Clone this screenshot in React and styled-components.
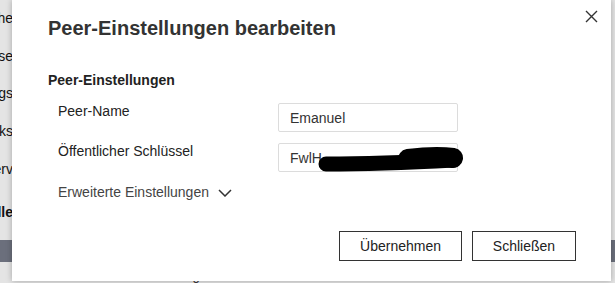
import React from "react"
import styled, { createGlobalStyle } from "styled-components"

const GlobalStyle = createGlobalStyle`
    html, body {
        margin: 0;
        padding: 0;
        background: #e4e4e4;
    }
    * {
        box-sizing: border-box;
    }
`;

const Screen = styled.div`
    position: relative;
    width: 615px;
    height: 283px;
    overflow: hidden;
    background: #e4e4e4;
    font-family: "Liberation Sans", Arial, sans-serif;
`;

const Backdrop = styled.div`
    display: flex;
    flex-direction: column;
    height: 100%;
`;

const NavList = styled.div`
    display: flex;
    flex-direction: column;
    padding-top: 8px;
    height: 240px;
`;

const NavItem = styled.div`
    width: 13px;
    height: 39px;
    display: flex;
    justify-content: flex-end;
    overflow: hidden;
    white-space: nowrap;
    font-size: 14px;
    line-height: 20px;
    font-weight: ${({ $bold }) => ($bold ? 700 : 400)};
    color: #111;
    margin-top: ${({ $offset }) => $offset || 0}px;
`;

const Band = styled.div`
    height: 36px;
    background: #6b6f7c;
`;

const BottomLine = styled.div`
    display: flex;
    gap: 100px;
    padding: 6px 0 0 40px;
    font-size: 13px;
    color: #222;
    white-space: nowrap;
`;

const Dialog = styled.div`
    position: absolute;
    left: 12px;
    top: 0;
    width: 599px;
    height: 281px;
    background: #fff;
    box-shadow: 0 0 6px rgba(0, 0, 0, 0.28);
    padding: 16px 35px 20px 36px;
    display: flex;
    flex-direction: column;
    color: #222;
`;

const Title = styled.h2`
    margin: 0;
    font-size: 20px;
    line-height: 24px;
    font-weight: 700;
    color: #333;
`;

const CloseButton = styled.button`
    position: absolute;
    top: 9px;
    right: 13px;
    width: 14px;
    height: 14px;
    padding: 0;
    border: none;
    background: none;
    display: flex;
    align-items: center;
    justify-content: center;
    cursor: pointer;
`;

const Section = styled.div`
    margin-top: 32px;
    display: flex;
    flex-direction: column;
`;

const SectionTitle = styled.div`
    font-size: 14px;
    line-height: 17px;
    font-weight: 700;
    color: #222;
`;

const Fields = styled.div`
    display: flex;
    flex-direction: column;
    gap: 11px;
    margin-top: 14px;
    padding-left: 10px;
`;

const Row = styled.div`
    display: flex;
    align-items: flex-start;
`;

const Label = styled.label`
    width: 220px;
    font-size: 14px;
    line-height: 17px;
    color: #222;
`;

const InputWrap = styled.div`
    position: relative;
    width: 180px;
`;

const Input = styled.input`
    width: 180px;
    height: 29px;
    border: 1px solid #dcdcdc;
    border-radius: 2px;
    padding: 0 11px;
    font-family: "Liberation Sans", Arial, sans-serif;
    font-size: 14px;
    color: #333;
    background: #fff;
    outline: none;
`;

const Redaction = styled.svg`
    position: absolute;
    left: 40px;
    top: 3px;
`;

const Advanced = styled.button`
    margin-top: 12px;
    padding: 0 0 0 10px;
    border: none;
    background: none;
    display: flex;
    align-items: center;
    gap: 9px;
    font-family: "Liberation Sans", Arial, sans-serif;
    font-size: 14px;
    line-height: 17px;
    color: #444;
    cursor: pointer;
    align-self: flex-start;
`;

const Footer = styled.div`
    margin-top: auto;
    display: flex;
    justify-content: flex-end;
    gap: 10px;
`;

const Button = styled.button`
    height: 30px;
    width: ${({ $width }) => $width}px;
    border: 1px solid #333;
    border-radius: 0;
    background: #fff;
    font-family: "Liberation Sans", Arial, sans-serif;
    font-size: 14px;
    color: #222;
    cursor: pointer;
`;

const navItems = [
    { text: "Suche" },
    { text: "Adresse" },
    { text: "Einstellungs" },
    { text: "Netzwerks" },
    { text: "Serv" },
    { text: "Peer-Tabelle", bold: true, offset: 6 },
];

const App = () => {
    return (
        <Screen>
            <GlobalStyle />
            <Backdrop>
                <NavList>
                    {navItems.map((item) => (
                        <NavItem key={item.text} $bold={item.bold} $offset={item.offset}>
                            {item.text}
                        </NavItem>
                    ))}
                </NavList>
                <Band />
                <BottomLine>
                    <span>Nehmen Sie die Einstellungen</span>
                    <span>Aktualisieren</span>
                </BottomLine>
            </Backdrop>

            <Dialog>
                <Title>Peer-Einstellungen bearbeiten</Title>
                <CloseButton aria-label="Schließen">
                    <svg width="13" height="13" viewBox="0 0 13 13">
                        <path d="M1 1 L12 12 M12 1 L1 12" stroke="#333" strokeWidth="1.4" fill="none" />
                    </svg>
                </CloseButton>

                <Section>
                    <SectionTitle>Peer-Einstellungen</SectionTitle>
                    <Fields>
                        <Row>
                            <Label>Peer-Name</Label>
                            <InputWrap>
                                <Input defaultValue="Emanuel" readOnly />
                            </InputWrap>
                        </Row>
                        <Row>
                            <Label>Öffentlicher Schlüssel</Label>
                            <InputWrap>
                                <Input defaultValue="FwlH" readOnly />
                                <Redaction width="146" height="28" viewBox="0 0 146 28">
                                    <path d="M8 18 C 40 18, 80 17, 136 14" stroke="#000" strokeWidth="15" strokeLinecap="round" fill="none" />
                                    <path d="M90 13 C 105 11, 122 10, 135 12" stroke="#000" strokeWidth="20" strokeLinecap="round" fill="none" />
                                </Redaction>
                            </InputWrap>
                        </Row>
                    </Fields>
                </Section>

                <Advanced>
                    Erweiterte Einstellungen
                    <svg width="14" height="8" viewBox="0 0 14 8">
                        <path d="M1 1 L7 7 L13 1" stroke="#333" strokeWidth="1.5" fill="none" />
                    </svg>
                </Advanced>

                <Footer>
                    <Button $width={123}>Übernehmen</Button>
                    <Button $width={104}>Schließen</Button>
                </Footer>
            </Dialog>
        </Screen>
    )
}

export default App
